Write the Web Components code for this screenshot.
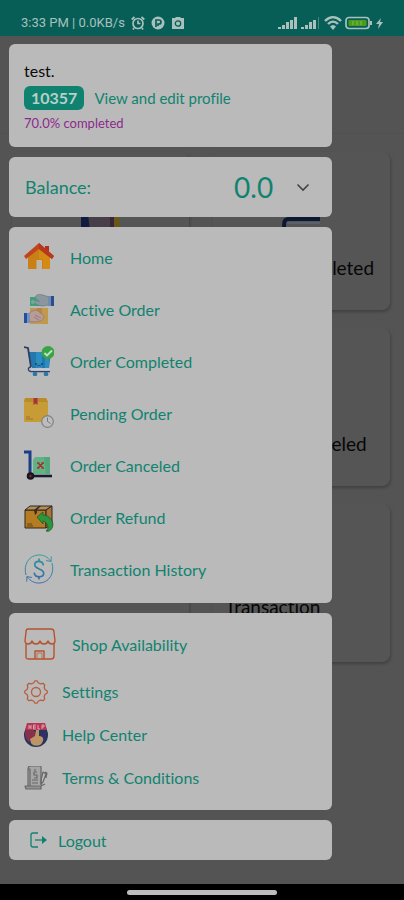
<!DOCTYPE html>
<html lang="en">
<head>
<meta charset="utf-8">
<meta name="viewport" content="width=device-width, initial-scale=1">
<title>Menu</title>
<style>
  body {
    margin: 0;
    background: #545454;
    font-family: Lato, "Open Sans", sans-serif;
    font-variant-ligatures: none;
    --teal: #108370;
    --card: #bababa;
  }
</style>
</head>
<body>

<phone-shell>
  <status-bar slot="top" time="3:33 PM" speed="0.0KB/s"></status-bar>

  <order-board slot="page">
    <order-tile icon="tileHands"></order-tile>
    <order-tile icon="tileCart">Order Completed</order-tile>
    <order-tile></order-tile>
    <order-tile>Order Canceled</order-tile>
    <order-tile></order-tile>
    <order-tile>Transaction History</order-tile>
  </order-board>

  <side-drawer slot="drawer">
    <profile-card name="test." code="10357" progress="70.0% completed"></profile-card>
    <balance-card amount="0.0">Balance:</balance-card>
    <menu-card>
      <menu-item icon="home">Home</menu-item>
      <menu-item icon="active">Active Order</menu-item>
      <menu-item icon="completed">Order Completed</menu-item>
      <menu-item icon="pending">Pending Order</menu-item>
      <menu-item icon="canceled">Order Canceled</menu-item>
      <menu-item icon="refund">Order Refund</menu-item>
      <menu-item icon="history">Transaction History</menu-item>
    </menu-card>
    <menu-card class="second">
      <menu-item icon="shop" size="large">Shop Availability</menu-item>
      <menu-item icon="settings" size="small">Settings</menu-item>
      <menu-item icon="help" size="small">Help Center</menu-item>
      <menu-item icon="terms" size="small">Terms &amp; Conditions</menu-item>
    </menu-card>
    <logout-card>Logout</logout-card>
  </side-drawer>
</phone-shell>

<script>
const icons = {
  home: `<svg viewBox="0 0 30 30">
    <path d="M4 14 15 5l11 9v13H4z" fill="#c98016"/>
    <path d="M15 5l11 9v13h-7V17h-4z" fill="#d48a13"/>
    <path d="M21 4h4v8l-4-3z" fill="#b52f1c"/>
    <path d="M15 1 0 14l2 3L15 7l13 10 2-3z" fill="#c0451d"/>
    <path d="M15 1v6l13 10 2-3z" fill="#b63820"/>
    <path d="M12.500 18h5.500v9h-5.500z" fill="#bcb6ad"/></svg>`,
  active: `<svg viewBox="0 0 30 30">
    <path d="M6 3h14v9H6z" fill="#419f7b"/>
    <path d="M11 3c2-3 5-3 8-2l6 2v8l-6 1c-4 0-8-2-9-4 2-2 5-1 6 0" fill="#8b969f" stroke="#5c7580" stroke-width=".6"/>
    <circle cx="9" cy="8" r="2" fill="#76a898"/>
    <path d="M24 2h3v10h-3z" fill="#748bb0"/><path d="M27 2h3v10h-3z" fill="#294d8e"/>
    <path d="M6 14h18v16H6z" fill="#c1994c"/><path d="M13 14h5v8h-5z" fill="#b88440"/>
    <path d="M4 20c4-3 8-5 10-3l5 4c2 2 0 5-3 6l-5 1-7-1z" fill="#b79c98" stroke="#866f7c" stroke-width=".6"/>
    <path d="M11 21l6 3m-7-1l5 3" stroke="#846f79" stroke-width=".7"/>
    <path d="M3 19h3v10H3z" fill="#7691bd"/><path d="M0 19h3v10H0z" fill="#23509c"/></svg>`,
  completed: `<svg viewBox="0 0 30 30">
    <path d="M5 6h22l-2 16H8z" fill="#2379ad"/>
    <path d="M12 6h6v16h-6zM21 8h4v14h-4z" fill="#2b8dc0"/>
    <path d="M0 1l4 1 3 19" fill="none" stroke="#263e68" stroke-width="1.800"/>
    <path d="M7 21c-4 0-3 4.500 0 4.500h19" fill="none" stroke="#2c4269" stroke-width="1.300"/>
    <path d="M7 23.500h19" stroke="#c3c8d0" stroke-width="2.400"/>
    <circle cx="11" cy="28" r="2.300" fill="#2b78a7"/><circle cx="22" cy="28" r="2.300" fill="#2b78a7"/>
    <circle cx="12" cy="18" r=".9" fill="#163c68"/><circle cx="18" cy="18" r=".9" fill="#163c68"/>
    <path d="M13 20q2-1.500 4 0" fill="none" stroke="#163c68" stroke-width=".7"/>
    <circle cx="24" cy="6.500" r="6.500" fill="#38a544"/>
    <path d="M20.500 7l2.500 2.500 5-5" fill="none" stroke="#c7dcc9" stroke-width="1.800"/></svg>`,
  pending: `<svg viewBox="0 0 30 30">
    <path d="M1 0h21l2 4v18a2 2 0 0 1-2 2H1a1 1 0 0 1-1-1V3z" fill="#c79b35"/>
    <path d="M1 0h21l2 4H0z" fill="#ba8b2c"/>
    <path d="M9.500 0h4v7l-2-1.500-2 1.500z" fill="#a7343a"/>
    <path d="M2 21h7M2 19h4" stroke="#8e6d2a" stroke-width=".8"/>
    <circle cx="23.500" cy="23.500" r="5.800" fill="#bdbdbd" stroke="#808080" stroke-width="1.200"/>
    <path d="M23.500 19.500v4l3 2" fill="none" stroke="#777" stroke-width="1"/></svg>`,
  canceled: `<svg viewBox="0 0 30 30">
    <path d="M11 7h15v17H9V10z" fill="#60b387"/><path d="M20 7h6v17h-4z" fill="#52a77c"/>
    <path d="M0 2h6v24" fill="none" stroke="#1b3e84" stroke-width="3"/>
    <path d="M6 26h22" stroke="#151c2e" stroke-width="2.600"/>
    <circle cx="6.500" cy="26" r="3.800" fill="#17171d"/><circle cx="6.500" cy="26" r="1.200" fill="#8e2030"/>
    <path d="M14 13l5 5m0-5l-5 5M13 13h2.500m2 0H20m-7 5h2.500m2 0H20" stroke="#a73128" stroke-width="1.600"/></svg>`,
  refund: `<svg viewBox="0 0 30 30">
    <g stroke="#30271b" stroke-linejoin="round"><path d="M1 8h21v18H1z" fill="#b67c22"/>
    <path d="M1 8l5-4h22l-6 4z" fill="#b18e5d"/><path d="M22 8l6-4v18l-6 4z" fill="#a7743a"/></g>
    <path d="M17 4l-4 4v3l-2 2-1-5 5-4z" fill="#3a2b1b"/>
    <path d="M3 22h5M3 24h6" stroke="#4a3315" stroke-width=".8"/>
    <path d="M13 15l6-5v3c7 0 12 8 9 13-1 2-3 4-6 3 3-2 3-8-3-10v3z" fill="#2c963f" stroke="#1e5929" stroke-width=".8"/></svg>`,
  history: `<svg viewBox="0 0 32 32">
    <defs><linearGradient id="flow" gradientUnits="userSpaceOnUse" x1="0" y1="0" x2="0" y2="32"><stop stop-color="#2b9c99"/><stop offset="1" stop-color="#3b65ad"/></linearGradient></defs>
    <g fill="none" stroke="url(#flow)" stroke-width="1" stroke-linecap="round" stroke-linejoin="round">
    <path d="M2 22C-1 12 5 1 16 1c5 0 9 2 12 6M30 10c3 10-3 21-14 21-5 0-9-2-12-6"/>
    <path d="M29 3v5l-5-1M3 29v-5l5 1"/>
    <path d="M20.500 11.500c-1-5-9-4.500-9 0 0 5 9.500 4 9.500 9 0 5-9 5-10 0" stroke-width="1.800"/><path d="M16 8V5.500M16 24v2.500" stroke-width="1.800"/></g></svg>`,
  shop: `<svg viewBox="0 0 32 32" fill="none" stroke="#b5532c" stroke-width="1.400" stroke-linejoin="round">
    <path d="M4 1h23c2 0 3 1 3 3l1 9c0 4-6 4-7 0-1 4-7 4-8 0-1 4-7 4-8 0-1 4-7 4-7 0L2 4c0-2 1-3 2-3z"/>
    <path d="M2 16v13c0 2 1 2 3 2h22c2 0 3-1 3-3V16M11 31v-8h9v8"/><path d="M13 31v-6h5v6" stroke-width=".7"/></svg>`,
  settings: `<svg viewBox="0 0 24 24" fill="none" stroke="#b7603d" stroke-width="1.300" stroke-linejoin="round">
    <path d="M9.500 3 11 .8h2L14.500 3l2 .8L19 3.300 20.700 5l-.5 2.500.8 2L23.200 11v2L21 14.500l-.8 2 .5 2.500L19 20.700l-2.500-.5-2 .8L13 23.200h-2L9.500 21l-2-.8-2.500.5L3.300 19l.5-2.500-.8-2L.8 13v-2L3 9.500l.8-2L3.300 5 5 3.300l2.500.5z"/>
    <circle cx="12" cy="12" r="4.500"/></svg>`,
  help: `<svg viewBox="0 0 24 24">
    <circle cx="12" cy="12" r="12" fill="#24355f"/>
    <path d="M2 6h7l4 6-8 7C1 16 0 10 2 6z" fill="#86304c"/><path d="M18 8l5 1-2 8-5 2z" fill="#343065"/>
    <path d="M6 16l5-3 1-6c0-2 3-2 3 0v6c5 0 5 4 3 7-2 4-10 3-11 0z" fill="#bd9463"/>
    <path d="M3 0h18l2 7H1z" fill="#b83552"/>
    <path d="M5 2v4m0-2h2m0-2v4M12 2H9.500v4H12M9.500 4H12M14 2v4h2M18 6V2h2v2h-2" fill="none" stroke="#d8b1ba" stroke-width=".9"/></svg>`,
  terms: `<svg viewBox="0 0 24 24" fill="none" stroke="#686868" stroke-width="1.200" stroke-linejoin="round">
    <path d="M4 20V3c0-2 1-3 3-3h10v19" fill="#a5a5a5"/><path d="M4 3h2v17"/>
    <path d="M1 20h16v3H2z" fill="#929292"/><path d="M11 3v2m2 1h-3v3h3v3h-3M8 14h6m-6 3h6"/>
    <path d="M19 6l3 2-3 8-2 2v-4zM17 20l4-2M21 6l2 1-1 5"/></svg>`,
  logout: `<svg viewBox="0 0 18 16" fill="none" stroke="#108370" stroke-width="1.300">
    <path d="M8 1H3a2 2 0 0 0-2 2v10a2 2 0 0 0 2 2h5"/><path d="M5 8h9"/><path d="M12 4l5 4-5 4z" fill="#108370" stroke="none"/></svg>`,
  chevron: `<svg viewBox="0 0 14 14" fill="none" stroke="#3f4644" stroke-width="1.600"><path d="M1.500 4.500 7 10l5.500-5.500"/></svg>`,
  tileHands: `<svg viewBox="0 0 40 32"><path d="M0 14h9v18H0z" fill="#101b40"/>
    <path d="M7 14h24v18H9z" fill="#463e48"/><path d="M29 14h4v18h-4z" fill="#3b2639"/><path d="M33 14h6v18h-6z" fill="#68561b"/></svg>`,
  tileCart: `<svg viewBox="0 0 40 32"><path d="M38 19H7c-5 0-5 3-5 10h36" fill="none" stroke="#0c1930" stroke-width="4"/><path d="M5 23h33" stroke="#59616d" stroke-width="2"/></svg>`,
  alarm: `<svg viewBox="0 0 14 14" fill="none" stroke="#a9c0bd" stroke-width="1.700"><circle cx="7" cy="7.500" r="5"/>
    <path d="M7 4.500v3h2.500M.7 3.500 3.500 1M13.300 3.500 10.500 1M3 12l-1 1.500M11 12l1 1.500"/></svg>`,
  badge: `<svg viewBox="0 0 14 14"><circle cx="7" cy="7" r="6.500" fill="#a9c0bd"/><path d="M5 11V4h3a2 2 0 0 1 0 4H7v2" fill="none" stroke="#075e57" stroke-width="1.700"/></svg>`,
  camera: `<svg viewBox="0 0 14 14"><path d="M1 2h3l1-1h4l1 1h3v11H1z" fill="#a9c0bd"/><circle cx="7" cy="7.500" r="2.700" fill="none" stroke="#075e57" stroke-width="1.300"/></svg>`,
  signal: `<svg viewBox="0 0 20 12" fill="#a9c0bd"><path d="M0 10h3v2H0zM4 8h3v4H4zM8 5h3v7H8zM12 3h3v9h-3zM16 0h3v12h-3z"/></svg>`,
  signalLow: `<svg viewBox="0 0 20 12" fill="#a9c0bd"><path d="M0 10h3v2H0zM4 8h3v4H4zM8 5h3v7H8zM12 3h3v9h-3z"/><path d="M17 0h1v12h-1z" fill="#4a8580"/></svg>`,
  wifi: `<svg viewBox="0 0 18 14" fill="none" stroke="#a9c0bd" stroke-width="2.400"><path d="M1 5c5-5 11-5 16 0M4 8c3-3 7-3 10 0"/><path d="M6 10.500c2-2 4-2 6 0L9 14z" fill="#a9c0bd" stroke="none"/></svg>`,
  battery: `<svg viewBox="0 0 28 14"><rect x="1" y="1.500" width="23" height="11" rx="3" fill="#075e57" stroke="#a9c0bd" stroke-width="1.700"/>
    <rect x="3.500" y="4" width="18" height="6" rx="1" fill="#4a9d19"/><path d="M8 5v4M12 5v4M16 5v4" stroke="#8ab56a"/><path d="M25 5h2v4h-2z" fill="#a9c0bd"/></svg>`,
  bolt: `<svg viewBox="0 0 8 14"><path d="M5 2 0 8h3l-1 5 5-7H4z" fill="#a9c0bd"/></svg>`
};

class AppIcon extends HTMLElement {
  constructor() {
    super();
    this.attachShadow({ mode: 'open' });
  }

  connectedCallback() {
    this.shadowRoot.innerHTML = `
      <style>
        :host { display: block; flex: none; }
        svg { display: block; width: 100%; height: 100%; }
      </style>
      ${icons[this.getAttribute('name')] || ''}`;
  }
}

class PhoneShell extends HTMLElement {
  constructor() {
    super();
    this.attachShadow({ mode: 'open' });
    this.shadowRoot.innerHTML = `
      <style>
        :host { display: grid; grid-template-rows: auto 1fr auto; min-height: 100vh; }
        /* page and drawer share one cell, the drawer lies on top */
        main { display: grid; background: #545454; }
        ::slotted([slot=page]), ::slotted([slot=drawer]) { grid-area: 1 / 1; }
        ::slotted([slot=drawer]) { z-index: 1; }
        footer { display: flex; justify-content: center; align-items: center; height: 16px; background: #000; }
        span { width: 150px; height: 5px; border-radius: 3px; background: #bdbdbd; }
      </style>
      <slot name="top"></slot>
      <main><slot name="page"></slot><slot name="drawer"></slot></main>
      <footer><span></span></footer>`;
  }
}

class StatusBar extends HTMLElement {
  constructor() {
    super();
    this.attachShadow({ mode: 'open' });
  }

  connectedCallback() {
    this.shadowRoot.innerHTML = `
      <style>
        :host {
          display: flex; justify-content: space-between; align-items: center;
          height: 26px; padding: 10px 20px 0 21px;
          background: #075e57; color: #a9c0bd;
          font: 13px/20px Roboto, sans-serif;
        }
        div { display: flex; align-items: center; gap: 6px; }
        .right { gap: 3px; }
        app-icon { width: 14px; height: 14px; }
        .bars { width: 20px; height: 12px; }
        .wifi { width: 18px; }
        .battery { width: 28px; }
        .bolt { width: 8px; }
      </style>
      <div>
        <span>${this.getAttribute('time')} | ${this.getAttribute('speed')}</span>
        <app-icon name="alarm"></app-icon>
        <app-icon name="badge"></app-icon>
        <app-icon name="camera"></app-icon>
      </div>
      <div class="right">
        <app-icon class="bars" name="signal"></app-icon>
        <app-icon class="bars" name="signalLow"></app-icon>
        <app-icon class="wifi" name="wifi"></app-icon>
        <app-icon class="battery" name="battery"></app-icon>
        <app-icon class="bolt" name="bolt"></app-icon>
      </div>`;
  }
}

class OrderBoard extends HTMLElement {
  constructor() {
    super();
    this.attachShadow({ mode: 'open' });
    this.shadowRoot.innerHTML = `
      <style>
        :host { display: block; }
        header { height: 97px; border-bottom: 1px solid #505050; }
        section { display: grid; grid-template-columns: 1fr 1fr; gap: 18px 24px; padding: 18px 14px 18px 12px; }
      </style>
      <header></header>
      <section><slot></slot></section>`;
  }
}

class OrderTile extends HTMLElement {
  constructor() {
    super();
    this.attachShadow({ mode: 'open' });
  }

  connectedCallback() {
    this.shadowRoot.innerHTML = `
      <style>
        :host {
          display: flex; flex-direction: column; align-items: center;
          min-height: 158px; border-radius: 8px; box-sizing: border-box;
          padding: 48px 12px 6px; background: #555;
          box-shadow: 1px 2px 3px #424242;
          color: #060606; font-size: 19px; line-height: 26px;
        }
        app-icon { width: 40px; height: 32px; }
        div { display: flex; align-items: center; flex: 1; }
      </style>
      <app-icon name="${this.getAttribute('icon') || ''}"></app-icon>
      <div><slot></slot></div>`;
  }
}

class SideDrawer extends HTMLElement {
  constructor() {
    super();
    this.attachShadow({ mode: 'open' });
    this.shadowRoot.innerHTML = `
      <style>
        :host { display: flex; flex-direction: column; gap: 10px; width: 80%; padding: 8px 9px 24px; }
        ::slotted(*) { border-radius: 6px; background: var(--card); color: var(--teal); }
      </style>
      <slot></slot>`;
  }
}

class ProfileCard extends HTMLElement {
  constructor() {
    super();
    this.attachShadow({ mode: 'open' });
  }

  connectedCallback() {
    this.shadowRoot.innerHTML = `
      <style>
        :host { display: block; padding: 16px 15px 15px; }
        .name { color: #0a0a0a; font-size: 16px; line-height: 22px; }
        .row { display: flex; align-items: center; gap: 10px; margin: 4px 0; }
        .code {
          padding: 0 7px; border-radius: 6px; background: var(--teal); color: #b9cfca;
          font-size: 16px; line-height: 24px; font-weight: 700;
        }
        a { color: inherit; font-size: 15px; line-height: 24px; text-decoration: none; }
        .progress { color: #8c2a8c; font-size: 13px; line-height: 18px; }
      </style>
      <div class="name">${this.getAttribute('name')}</div>
      <div class="row">
        <span class="code">${this.getAttribute('code')}</span>
        <a href="#profile">View and edit profile</a>
      </div>
      <div class="progress">${this.getAttribute('progress')}</div>`;
  }
}

class BalanceCard extends HTMLElement {
  constructor() {
    super();
    this.attachShadow({ mode: 'open' });
  }

  connectedCallback() {
    this.shadowRoot.innerHTML = `
      <style>
        :host { display: block; }
        button {
          display: flex; align-items: center; width: 100%; height: 60px; padding: 0 22px 0 16px;
          border: 0; background: none; color: inherit; font: inherit; font-size: 18px; cursor: pointer;
        }
        .amount { margin-left: auto; margin-right: 23px; font-size: 28px; }
        app-icon { width: 14px; height: 14px; }
      </style>
      <button type="button" aria-expanded="false">
        <slot></slot>
        <span class="amount">${this.getAttribute('amount')}</span>
        <app-icon name="chevron"></app-icon>
      </button>`;
  }
}

class MenuCard extends HTMLElement {
  constructor() {
    super();
    this.attachShadow({ mode: 'open' });
    this.shadowRoot.innerHTML = `
      <style>
        :host { display: block; padding: 4px 0 8px; }
        :host(.second) { padding: 5px 0 11px; }
      </style>
      <nav><slot></slot></nav>`;
  }
}

class MenuItem extends HTMLElement {
  constructor() {
    super();
    this.attachShadow({ mode: 'open' });
  }

  connectedCallback() {
    const icon = this.getAttribute('icon');
    this.shadowRoot.innerHTML = `
      <style>
        :host { display: block; --icon: 30px; --row: 52px; --gap: 16px; }
        :host([size=large]) { --icon: 32px; }
        :host([size=small]) { --icon: 24px; --row: 43px; --gap: 14px; }
        a {
          display: flex; align-items: center; gap: var(--gap); height: var(--row); padding: 0 15px;
          color: inherit; font-size: 16px; text-decoration: none;
        }
        app-icon { width: var(--icon); height: var(--icon); }
      </style>
      <a href="#${icon}"><app-icon name="${icon}"></app-icon><span><slot></slot></span></a>`;
  }
}

class LogoutCard extends HTMLElement {
  constructor() {
    super();
    this.attachShadow({ mode: 'open' });
    this.shadowRoot.innerHTML = `
      <style>
        :host { display: block; }
        button {
          display: flex; align-items: center; gap: 10px; width: 100%; height: 40px; padding: 0 21px;
          border: 0; background: none; color: inherit; font: inherit; font-size: 16px; cursor: pointer;
        }
        app-icon { width: 18px; height: 16px; }
      </style>
      <button type="button"><app-icon name="logout"></app-icon><slot></slot></button>`;
  }
}

window.customElements.define('app-icon', AppIcon);
window.customElements.define('phone-shell', PhoneShell);
window.customElements.define('status-bar', StatusBar);
window.customElements.define('order-board', OrderBoard);
window.customElements.define('order-tile', OrderTile);
window.customElements.define('side-drawer', SideDrawer);
window.customElements.define('profile-card', ProfileCard);
window.customElements.define('balance-card', BalanceCard);
window.customElements.define('menu-card', MenuCard);
window.customElements.define('menu-item', MenuItem);
window.customElements.define('logout-card', LogoutCard);
</script>
</body>
</html>
